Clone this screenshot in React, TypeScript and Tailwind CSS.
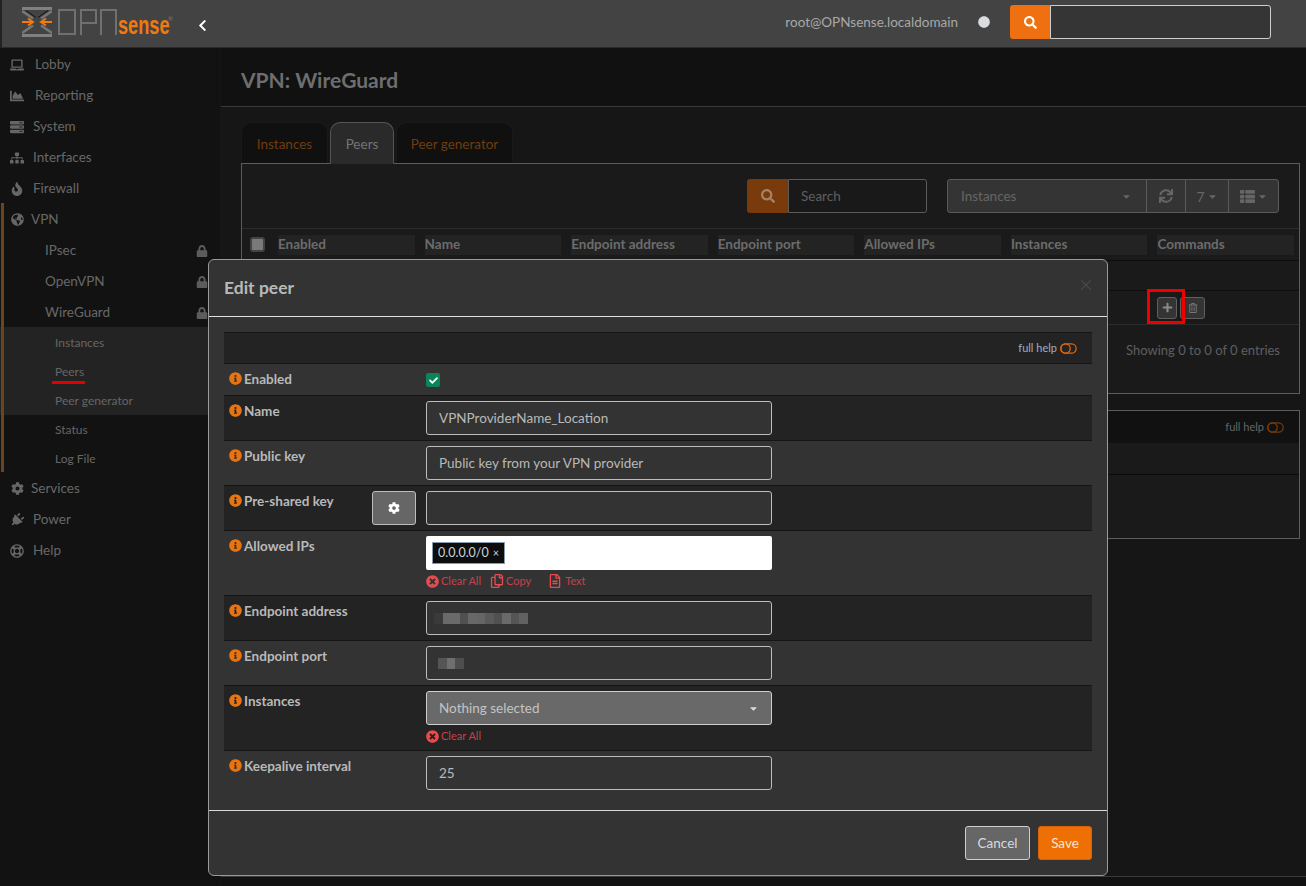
import type { ReactNode } from "react";
import { X } from "lucide-react";
import {
  FaCaretDown,
  FaChevronLeft,
  FaCheck,
  FaCircle,
  FaCog,
  FaFire,
  FaGlobeAmericas,
  FaInfoCircle,
  FaLaptop,
  FaRegLifeRing,
  FaLock,
  FaPlug,
  FaPlus,
  FaRegCopy,
  FaRegFileAlt,
  FaRegTrashAlt,
  FaSearch,
  FaServer,
  FaSitemap,
  FaSync,
  FaTimesCircle,
  FaChartArea,
  FaThList,
} from "react-icons/fa";

const font = "font-['Lato','Noto_Sans',sans-serif]";

function NavItem({ icon, label, pad = "", low }: { icon: ReactNode; label: string; pad?: string; low?: boolean }) {
  return (
    <div className={`flex h-[31px] items-center pl-[9px] text-[13.5px] text-[#686868] ${low ? "pt-[2px]" : ""}`}>
      <span className="flex w-4 justify-center text-[14px] text-[#666]">{icon}</span>
      <span className={pad || "ml-[5px]"}>{label}</span>
    </div>
  );
}

function SubItem({ label }: { label: string }) {
  return (
    <div className="flex h-[31px] items-center justify-between pl-[45px] pr-[12px] pt-[2px] text-[13.5px] text-[#686868]">
      <span>{label}</span>
      <FaLock className="text-[12px] text-[#5c5c5c]" />
    </div>
  );
}

function Sidebar() {
  return (
    <aside className="relative w-[221px] shrink-0 border-r border-[#161616] bg-[#121212]">
      <div className="absolute left-[1px] top-[155px] h-[269px] w-[3px] bg-[#6b4420]" />
      <NavItem low icon={<FaLaptop />} label="Lobby" pad="ml-[10px]" />
      <NavItem low icon={<FaChartArea />} label="Reporting" pad="ml-[10px]" />
      <NavItem low icon={<FaServer />} label="System" pad="ml-[8px]" />
      <NavItem low icon={<FaSitemap />} label="Interfaces" pad="ml-[8px]" />
      <NavItem low icon={<FaFire />} label="Firewall" pad="ml-[8px]" />
      <NavItem low icon={<FaGlobeAmericas className="text-[13px]" />} label="VPN" pad="ml-[6px]" />
      <SubItem label="IPsec" />
      <SubItem label="OpenVPN" />
      <SubItem label="WireGuard" />
      <div className="bg-[#232323] pt-px text-[12px] text-[#666]">
        <div className="flex h-[29px] items-center pl-[55px]">Instances</div>
        <div className="relative flex h-[29px] items-center pl-[55px]">
          Peers
          <div className="absolute left-[52px] top-[24px] h-[3px] w-[33px] bg-[#e30000]" />
        </div>
        <div className="flex h-[29px] items-center pl-[55px]">Peer generator</div>
      </div>
      <div className="text-[12px] text-[#666]">
        <div className="flex h-[29px] items-center pl-[55px]">Status</div>
        <div className="flex h-[29px] items-center pl-[55px]">Log File</div>
      </div>
      <NavItem icon={<FaCog className="text-[13px]" />} label="Services" pad="ml-[6px]" />
      <NavItem icon={<FaPlug className="rotate-45" />} label="Power" pad="ml-[8px]" />
      <NavItem icon={<FaRegLifeRing />} label="Help" pad="ml-[8px]" />
    </aside>
  );
}

function Logo() {
  return (
    <div className="relative mb-[3px] flex items-center">
      <svg width="30" height="30" viewBox="0 0 30 30" className="mr-[6px] shrink-0">
        <path d="M0 1.5h30M0 28.5h30" fill="none" stroke="#808080" strokeWidth="3" />
        <path d="M0 4l11 7.5M30 4l-11 7.5M0 26l11-7.5M30 26l-11-7.5" fill="none" stroke="#777" strokeWidth="2.5" />
        <path d="M4 3.5l10 7M26 3.5l-10 7" fill="none" stroke="#111" strokeWidth="1" />
        <path d="M0 15h10M6 11.5l5 3.5-5 3.5M30 15H20M24 11.5L19 15l5 3.5" fill="none" stroke="#ee7a10" strokeWidth="2" />
      </svg>
      <svg width="60" height="26" viewBox="0 0 60 26" fill="none" stroke="#707070" strokeWidth="2" className="mb-[1px] shrink-0">
        <rect x="1" y="1" width="16" height="24" />
        <path d="M23 26V1h15v13H23" />
        <path d="M43 26V1h15v25" />
      </svg>
      <span className="mt-[5px] shrink-0 origin-left font-['Liberation_Sans',sans-serif] text-[26px] font-bold leading-none text-[#ee7a10] [transform:scaleX(0.7)]">
        sense
      </span>
      <span className="absolute left-[146px] top-[9px] text-[6px] leading-none text-[#777]">®</span>
    </div>
  );
}

function Header() {
  return (
    <header className="flex h-[48px] shrink-0 items-center border-b border-l-2 border-b-[#2a2a2a] border-l-[#222] bg-[#434343] pl-[20px] pr-[35px]">
      <div className="w-[154px] shrink-0">
        <Logo />
      </div>
      <FaChevronLeft className="ml-[20px] mt-[3px] text-[13px] text-white" />
      <div className="mb-[3px] ml-auto flex items-center">
        <span className="text-[13.5px] text-[#a8a8a8]">root@OPNsense.localdomain</span>
        <FaCircle className="ml-[20px] text-[12px] text-[#dadde0]" />
        <div className="ml-[20px] flex h-[34px] w-[261px]">
          <div className="flex w-[40px] items-center justify-center rounded-l-[3px] bg-[#ee7010] text-[13px] text-white">
            <FaSearch />
          </div>
          <div className="flex-1 rounded-r-[3px] border border-[#cfcfcf] bg-[#353535]" />
        </div>
      </div>
    </header>
  );
}

function Tab({ label, w, active }: { label: string; w: string; active?: boolean }) {
  return (
    <div
      className={`flex items-center justify-center rounded-t-[10px] border pt-[3px] text-[13.5px] ${w} ${
        active
          ? "relative -mb-px h-[42px] border-[#555] border-b-[#2a2a2a] bg-[#2a2a2a] text-[#747474]"
          : "h-[41px] border-[#1a1a1a] border-b-transparent bg-[#101010] text-[#6f3d0b]"
      }`}
    >
      {label}
    </div>
  );
}

const tableHead = ["Enabled", "Name", "Endpoint address", "Endpoint port", "Allowed IPs", "Instances", "Commands"];

function PeerGrid() {
  return (
    <div className="h-[231px] border border-[#5c5c5c] bg-[#1a1a1a]">
      <div className="flex h-[64px] items-start pr-[20px] pt-[15px]">
        <div className="ml-[505px] flex h-[34px] w-[180px]">
          <div className="flex w-[41px] items-center justify-center rounded-l-[3px] bg-[#7a3b0c] text-[14px] text-[#a3836a]">
            <FaSearch />
          </div>
          <div className="flex flex-1 items-center rounded-r-[3px] border border-[#5a5a5a] bg-[#191919] pl-[12px] text-[13.5px] text-[#5f5f5f]">
            Search
          </div>
        </div>
        <div className="ml-auto flex h-[34px] text-[#666]">
          <div className="flex w-[200px] items-center justify-between rounded-l-[3px] border border-[#5a5a5a] bg-[#343434] pl-[13px] pr-[14px] text-[13.5px]">
            <span>Instances</span>
            <FaCaretDown className="text-[11px]" />
          </div>
          <div className="-ml-px flex w-[40px] items-center justify-center border border-[#5a5a5a] bg-[#343434] text-[14px]">
            <FaSync />
          </div>
          <div className="-ml-px flex w-[44px] items-center justify-center gap-[2px] border border-[#5a5a5a] bg-[#343434] text-[14px]">
            7<FaCaretDown className="text-[11px]" />
          </div>
          <div className="-ml-px flex w-[51px] items-center justify-center gap-[2px] rounded-r-[3px] border border-[#5a5a5a] bg-[#343434] text-[15px]">
            <FaThList />
            <FaCaretDown className="text-[11px]" />
          </div>
        </div>
      </div>
      <div className="flex h-[32px] items-center gap-[10px] border-t border-[#2c2c2c] pl-[8px] pr-[5px]">
        <div className="mr-[3px] h-[15px] w-[15px] rounded-[3px] border-2 border-[#444] bg-[#7a7a7a]" />
        {tableHead.map((h) => (
          <div
            key={h}
            className="flex h-[20px] flex-1 items-center bg-[#232323] text-[13.5px] font-bold text-[#6c6c6c]"
          >
            {h}
          </div>
        ))}
      </div>
      <div className="h-[30px] border-t border-[#0e0e0e]" />
      <div className="flex h-[35px] items-center border-y border-y-[#0e0e0e] border-b-[#2c2c2c] pl-[915px]">
        <div className="relative flex h-[22px] w-[20px] items-center justify-center rounded-[3px] border border-[#5f5f5f] bg-[#343434] text-[11px] text-[#8a8a8a]">
          <FaPlus />
          <div className="absolute -left-[11px] -top-[9px] h-[35px] w-[38px] border-[3px] border-[#ee0000]" />
        </div>
        <div className="ml-[3px] flex h-[22px] w-[25px] items-center justify-center rounded-[3px] border border-[#5f5f5f] bg-[#343434] text-[10px] text-[#777]">
          <FaRegTrashAlt />
        </div>
      </div>
      <div className="mt-[16px] pr-[19px] text-right text-[13px] text-[#5f5f5f]">Showing 0 to 0 of 0 entries</div>
    </div>
  );
}

function HelpToggle({ dim }: { dim?: boolean }) {
  const stroke = dim ? "#7a3b0c" : "#e0660f";
  return (
    <span className="flex items-center gap-[3px] text-[11px]">
      full help
      <svg width="17" height="11" viewBox="0 0 17 11" fill="none" stroke={stroke} strokeWidth="1.2">
        <rect x="0.8" y="0.8" width="15.4" height="9.4" rx="4.7" />
        <circle cx="5.5" cy="5.5" r="4.7" />
      </svg>
    </span>
  );
}

function Row({
  label,
  h,
  dark,
  children,
  extra,
}: {
  label: string;
  h: string;
  dark?: boolean;
  children?: ReactNode;
  extra?: ReactNode;
}) {
  return (
    <div className={`flex ${h} border-t border-[#151515] ${dark ? "bg-[#232323]" : "bg-[#333]"}`}>
      <div className="relative flex w-[202px] items-start pl-[5px] pt-[5px] text-[13.5px] font-bold text-[#b9b9b9]">
        <FaInfoCircle className="mr-[2px] mt-[3px] shrink-0 text-[13px] text-[#e8730f]" />
        <span>{label}</span>
        {extra}
      </div>
      <div className="pt-[5px]">{children}</div>
    </div>
  );
}

function TextInput({ value, children }: { value?: string; children?: ReactNode }) {
  return (
    <div className="flex h-[34px] w-[346px] items-center rounded-[3px] border border-[#bdbdbd] bg-[#333] px-[12px] text-[13.5px] text-[#b9b9b9]">
      {value}
      {children}
    </div>
  );
}

// the blurred-out values in the reference
function Blur({ cells }: { cells: string[] }) {
  return (
    <div className="flex h-[11px]">
      {cells.map((c, i) => (
        <div key={i} className="h-full w-[8.5px]" style={{ backgroundColor: c }} />
      ))}
    </div>
  );
}

function ClearAll() {
  return (
    <span className="flex items-center gap-[2px]">
      <FaTimesCircle className="text-[13px] text-[#e84a50]" /> Clear All
    </span>
  );
}

function Modal() {
  return (
    <div className="absolute left-[208px] top-[259px] h-[617px] w-[900px] rounded-[6px] border border-[#9a9a9a] bg-[#333] text-[#b9b9b9]">
      <div className="relative flex h-[57px] items-center border-b border-[#e0e0e0] pl-[15px] text-[17.5px] font-bold">
        Edit peer
        <X size={18} strokeWidth={1.4} className="absolute right-[12px] top-[16px] text-[#4f4f4f]" />
      </div>
      <div className="mx-[15px] mt-[15px]">
        <div className="flex h-[31px] items-center justify-end border-t border-[#151515] bg-[#232323] pr-[15px] text-[#9db0c4]">
          <HelpToggle />
        </div>
        <Row label="Enabled" h="h-[32px]">
          <div className="mt-[4px] flex h-[14px] w-[14px] items-center justify-center rounded-[2px] bg-[#0b8457] text-[9px] text-white">
            <FaCheck />
          </div>
        </Row>
        <Row label="Name" h="h-[45px]" dark>
          <TextInput value="VPNProviderName_Location" />
        </Row>
        <Row label="Public key" h="h-[45px]">
          <TextInput value="Public key from your VPN provider" />
        </Row>
        <Row
          label="Pre-shared key"
          h="h-[45px]"
          dark
          extra={
            <div className="absolute right-[10px] top-[5px] flex h-[34px] w-[44px] items-center justify-center rounded-[3px] border border-[#bdbdbd] bg-[#666] text-[12px] text-white">
              <FaCog />
            </div>
          }
        >
          <TextInput />
        </Row>
        <Row label="Allowed IPs" h="h-[65px]">
          <div className="flex h-[34px] w-[346px] items-center rounded-[2px] bg-white pl-[6px]">
            <span className="flex h-[22px] items-center gap-[4px] border border-[#8a9ab0] bg-[#0d0d0d] px-[5px] text-[12.5px] text-[#c9d3dc]">
              0.0.0.0/0 <span className="text-[11px]">×</span>
            </span>
          </div>
          <div className="mt-[3px] flex items-center text-[11px] text-[#c8404a]">
            <ClearAll />
            <span className="ml-[9px] flex items-center gap-[2px]">
              <FaRegCopy className="text-[14px] text-[#e84a50]" /> Copy
            </span>
            <span className="ml-[17px] flex items-center gap-[3px]">
              <FaRegFileAlt className="text-[14px] text-[#e84a50]" /> Text
            </span>
          </div>
        </Row>
        <Row label="Endpoint address" h="h-[45px]" dark>
          <TextInput>
            <div className="-ml-[5px]">
              <Blur cells={["#3a3a3a", "#6a6a6a", "#6a6a6a", "#505050", "#686868", "#666666", "#5a5a5a", "#505050", "#6a6a6a", "#555555", "#626262"]} />
            </div>
          </TextInput>
        </Row>
        <Row label="Endpoint port" h="h-[45px]">
          <TextInput>
            <div className="-ml-[1px]">
              <Blur cells={["#555555", "#6f6f6f", "#4e4e4e"]} />
            </div>
          </TextInput>
        </Row>
        <Row label="Instances" h="h-[65px]" dark>
          <div className="flex h-[34px] w-[346px] items-center justify-between rounded-[3px] border border-[#cfcfcf] bg-[#696969] px-[12px] text-[13.5px] text-[#c4c4c4]">
            <span>Nothing selected</span>
            <FaCaretDown className="text-[11px] text-[#ddd]" />
          </div>
          <div className="mt-[3px] text-[11px] text-[#c8404a]">
            <ClearAll />
          </div>
        </Row>
        <Row label="Keepalive interval" h="h-[45px]">
          <TextInput value="25" />
        </Row>
      </div>
      <div className="mt-[15px] flex h-[65px] items-start justify-end gap-[8px] border-t border-[#d8d8d8] pr-[15px] pt-[15px] text-[13.5px]">
        <div className="flex h-[34px] w-[65px] items-center justify-center rounded-[3px] border border-[#cfcfcf] bg-[#666] text-[#d6dbe0]">
          Cancel
        </div>
        <div className="flex h-[34px] w-[54px] items-center justify-center rounded-[3px] border border-[#d8620a] bg-[#ee7004] text-[#f6e4d4]">
          Save
        </div>
      </div>
    </div>
  );
}

export default function App() {
  return (
    <div className={`relative flex h-[886px] w-[1306px] flex-col overflow-hidden bg-[#111] ${font}`}>
      <Header />
      <div className="flex flex-1">
        <Sidebar />
        <main className="flex flex-1 flex-col">
          <div className="flex h-[59px] items-center border-b border-[#3a3a3a] pl-[20px] pt-[6px] text-[21px] font-bold text-[#6e6e6e]">
            VPN: WireGuard
          </div>
          <div className="h-[769px] bg-[#161616] pl-[20px] pr-[6px] pt-[15px]">
            <div className="flex gap-[2px]">
              <Tab label="Instances" w="w-[87px]" />
              <Tab label="Peers" w="w-[64px]" active />
              <Tab label="Peer generator" w="w-[117px]" />
            </div>
            <PeerGrid />
            <div className="mt-[16px] h-[129px] border border-[#5c5c5c] bg-[#1a1a1a]">
              <div className="flex h-[32px] items-center justify-end bg-[#111] pr-[15px] text-[#666]">
                <HelpToggle dim />
              </div>
              <div className="h-[32px] border-b border-[#0a0a0a]" />
            </div>
          </div>
          <div className="flex-1 border-t border-[#3a3a3a]" />
        </main>
      </div>
      <Modal />
    </div>
  );
}
